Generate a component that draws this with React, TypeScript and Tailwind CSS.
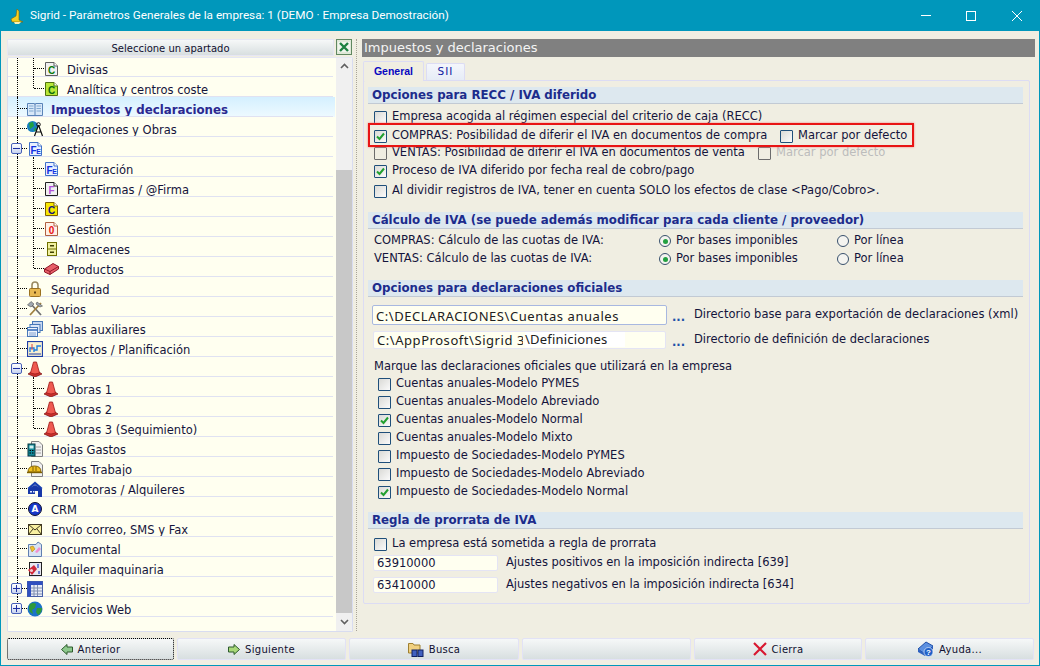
import type { ReactNode } from 'react';

const Svg = ({ children, w = 16, h = 16 }: { children: ReactNode; w?: number; h?: number }) => (
  <svg width={w} height={h} viewBox={`0 0 ${w} ${h}`} className="shrink-0 block">
    {children}
  </svg>
);

const Doc = ({ letter, bg, fg, stroke, small }: { letter: string; bg: string; fg: string; stroke: string; small?: string }) => (
  <Svg w={13} h={14}>
    <path d="M0.5 0.5H9L12.5 4V13.5H0.5Z" fill={bg} stroke={stroke} />
    <path d="M9 0.5V4H12.5" fill="#fff" stroke={stroke} />
    <text x={small ? 4.5 : 6.5} y="11.5" textAnchor="middle" fontSize="10" fontWeight="700" fontFamily="Liberation Sans" fill={fg}>
      {letter}
    </text>
    {small && (
      <text x="9.5" y="12" textAnchor="middle" fontSize="7" fontWeight="700" fontFamily="Liberation Sans" fill={fg}>
        {small}
      </text>
    )}
  </Svg>
);

const Cone = () => (
  <Svg>
    <path d="M1 13L4 11H12L15 13L8 16Z" fill="#c8302c" stroke="#7a1010" strokeWidth="0.7" />
    <path d="M6.5 1H9.5L12.5 12Q8 14 3.5 12Z" fill="#ef5a50" stroke="#a01818" strokeWidth="0.8" />
  </Svg>
);

const Globe = () => (
  <Svg>
    <circle cx="8" cy="8" r="7.5" fill="#1c72c8" />
    <path d="M3 3Q7 1 9 3L8 7L5 9L6 13L3 11Q1 7 3 3ZM10 7L15 7Q15 12 11 14L9 11Z" fill="#2f9a3a" />
  </Svg>
);

const icons: Record<string, ReactNode> = {
  divisas: <Doc letter="C" bg="#f0f0f0" fg="#0a7a0a" stroke="#606060" />,
  analitica: <Doc letter="C" bg="#b8e838" fg="#0a6a0a" stroke="#507010" />,
  book: (
    <Svg>
      <path d="M0.5 2.5H7.5L8 3.5L8.5 2.5H15.5V14.5H0.5Z" fill="#d8e8f8" stroke="#5a84b8" />
      <path d="M2 5H6.5M2 7.5H6.5M2 10H6.5M9.5 5H14M9.5 7.5H14M9.5 10H14" stroke="#80a8d0" />
      <path d="M8 3V14" stroke="#5a84b8" />
    </Svg>
  ),
  deleg: (
    <Svg w={17}>
      <circle cx="5.5" cy="5.5" r="5.5" fill="#1a80c0" />
      <path d="M2 2L6 1L7 5L3 8ZM8 6L10 9L7 10Z" fill="#20a040" />
      <path d="M11.5 4L7.5 15M11.5 4L15.5 15M9 11H14" stroke="#111" strokeWidth="1.2" fill="none" />
      <circle cx="11.5" cy="3.5" r="1.8" fill="none" stroke="#111" />
    </Svg>
  ),
  fe: <Doc letter="F" small="E" bg="#e8f0ff" fg="#1030e0" stroke="#4070c8" />,
  firma: <Doc letter="F" bg="#f0f0f0" fg="#b050d8" stroke="#202020" />,
  cartera: <Doc letter="C" bg="#f8e800" fg="#101080" stroke="#806000" />,
  gestion: <Doc letter="0" bg="#fff0e8" fg="#e81010" stroke="#b06040" />,
  almacen: (
    <Svg w={13} h={14}>
      <rect x="2.5" y="0.5" width="9" height="13" fill="#f0f0a0" stroke="#707000" />
      <path d="M2.5 7H11.5" stroke="#707000" />
      <rect x="5" y="3" width="4" height="1.5" fill="#404000" />
      <rect x="5" y="9.5" width="4" height="1.5" fill="#404000" />
    </Svg>
  ),
  producto: (
    <Svg w={15} h={12}>
      <path d="M0.5 6L9 0.5L14.5 3.5V6L6 11.5L0.5 9Z" fill="#e86068" stroke="#901828" />
      <path d="M0.5 6L6 8.5L14.5 3.5M6 8.5V11.5" fill="none" stroke="#901828" />
    </Svg>
  ),
  lock: (
    <Svg>
      <path d="M5 8V4Q5 1 8 1T11 4V8" fill="none" stroke="#9a8a60" strokeWidth="1.6" />
      <rect x="2.5" y="7.5" width="11" height="8" rx="1" fill="#e8b850" stroke="#9a7020" />
      <path d="M8 10V13M7 11.5H9" stroke="#604010" />
    </Svg>
  ),
  tools: (
    <Svg>
      <path d="M3 2L14 14" stroke="#707070" strokeWidth="1.8" />
      <path d="M14 2L3 14" stroke="#a08040" strokeWidth="1.8" />
      <path d="M0.5 4L4 0.5L7 3L4 6ZM10 1L15.5 5L13 6L9 3Z" fill="#a0a8b0" stroke="#505050" strokeWidth="0.6" />
    </Svg>
  ),
  tablas: (
    <Svg>
      <rect x="5.5" y="0.5" width="10" height="9" fill="#c8d8f0" stroke="#4878b8" />
      <rect x="3" y="3.5" width="10" height="8" fill="#dce8f8" stroke="#4878b8" />
      <rect x="0.5" y="6.5" width="10" height="9" fill="#eef4fc" stroke="#4878b8" />
      <path d="M0.5 9H10.5" stroke="#2f68b8" strokeWidth="1.5" />
      <path d="M2 12H9M2 14H9" stroke="#80a0d0" />
    </Svg>
  ),
  proyecto: (
    <Svg>
      <rect x="0.5" y="0.5" width="15" height="15" fill="#f8f0d0" stroke="#2040a8" strokeWidth="1.2" />
      <path d="M2 13H14" stroke="#2040a8" />
      <path d="M3 11V7H7V11M7 9H10V5H14" stroke="#2080e0" strokeWidth="1.4" fill="none" />
      <path d="M5 3V9" stroke="#e04040" />
    </Svg>
  ),
  cone: <Cone />,
  hojas: (
    <Svg>
      <path d="M4.5 0.5H12L15.5 4V15.5H4.5Z" fill="#f0f0f0" stroke="#808080" />
      <path d="M9 6H14M9 9H14M9 12H14" stroke="#a0a0a0" />
      <rect x="1" y="3" width="7" height="12" fill="#108898" stroke="#083840" />
      <rect x="2.5" y="4.5" width="4" height="3" fill="#d0f0f0" />
      <path d="M2.5 9.5H4M5 9.5H6.5M2.5 12H4M5 12H6.5" stroke="#000" />
    </Svg>
  ),
  partes: (
    <Svg>
      <path d="M4.5 0.5H12L15.5 4V15.5H4.5Z" fill="#f0f0f0" stroke="#808080" />
      <path d="M1 11Q1 5 7.5 5T14 11Z" fill="#f0c020" stroke="#806000" />
      <path d="M0 11.5H15" stroke="#806000" strokeWidth="1.4" />
      <path d="M6 6V10M9 6V10" stroke="#806000" />
    </Svg>
  ),
  casa: (
    <Svg>
      <path d="M0.5 7L8 0.5L15.5 7L14 8.5L8 3.5L2 8.5Z" fill="#1840b0" />
      <path d="M1 8L8 4L15 8V16H11V10H8V13H1Z" fill="#1838a8" />
      <rect x="3" y="10" width="2" height="1.5" fill="#e0e8ff" />
      <rect x="6" y="10" width="1.5" height="1.5" fill="#e0e8ff" />
    </Svg>
  ),
  crm: (
    <div className="w-[14px] h-[14px] rounded-full bg-[#1838c8] border border-[#101030] flex items-center justify-center text-white text-[9px] font-bold leading-none">
      A
    </div>
  ),
  mail: (
    <Svg w={14} h={11}>
      <rect x="0.5" y="0.5" width="13" height="10" fill="#f8f0a0" stroke="#403820" />
      <path d="M0.5 0.5L7 6L13.5 0.5M0.5 10.5L5 5M13.5 10.5L9 5" fill="none" stroke="#403820" />
    </Svg>
  ),
  documental: (
    <Svg>
      <path d="M1.5 3.5H9L11 1L14.5 3.5V15.5H1.5Z" fill="#d8e4f4" stroke="#6080b0" />
      <path d="M3 6L6 5L8 8L5 11Z" fill="#f0c030" stroke="#a07810" strokeWidth="0.5" />
      <path d="M8 11L12 6L14 8L10 12Z" fill="#f090d0" />
    </Svg>
  ),
  maquinaria: (
    <Svg w={14} h={14}>
      <rect x="1.5" y="0.5" width="12" height="13" fill="#e8e8f0" stroke="#202020" />
      <path d="M0 8L6 3L9 7L4 13Z" fill="#d02838" />
      <circle cx="3.5" cy="8.5" r="1.5" fill="#f0d0d0" />
      <path d="M10 2V6M11 9V12" stroke="#2040c0" strokeWidth="1.2" />
    </Svg>
  ),
  grid: (
    <Svg>
      <rect x="0.5" y="0.5" width="15" height="15" fill="#e8ecf8" stroke="#4860a8" />
      <rect x="0.5" y="0.5" width="15" height="3.5" fill="#3050c0" />
      <rect x="0.5" y="0.5" width="3.5" height="15" fill="#3050c0" />
      <path d="M7 4V15M10.5 4V15M4 7H15M4 10H15M4 13H15" stroke="#8090b0" />
    </Svg>
  ),
  globe: <Globe />,
};

type Node = { label: string; icon: string; level: 1 | 2; box?: '+' | '-'; last?: boolean; selected?: boolean };

const tree: Node[] = [
  { label: 'Divisas', icon: 'divisas', level: 2 },
  { label: 'Analítica y centros coste', icon: 'analitica', level: 2, last: true },
  { label: 'Impuestos y declaraciones', icon: 'book', level: 1, selected: true },
  { label: 'Delegaciones y Obras', icon: 'deleg', level: 1 },
  { label: 'Gestión', icon: 'fe', level: 1, box: '-' },
  { label: 'Facturación', icon: 'fe', level: 2 },
  { label: 'PortaFirmas / @Firma', icon: 'firma', level: 2 },
  { label: 'Cartera', icon: 'cartera', level: 2 },
  { label: 'Gestión', icon: 'gestion', level: 2 },
  { label: 'Almacenes', icon: 'almacen', level: 2 },
  { label: 'Productos', icon: 'producto', level: 2, last: true },
  { label: 'Seguridad', icon: 'lock', level: 1 },
  { label: 'Varios', icon: 'tools', level: 1 },
  { label: 'Tablas auxiliares', icon: 'tablas', level: 1 },
  { label: 'Proyectos / Planificación', icon: 'proyecto', level: 1 },
  { label: 'Obras', icon: 'cone', level: 1, box: '-' },
  { label: 'Obras 1', icon: 'cone', level: 2 },
  { label: 'Obras 2', icon: 'cone', level: 2 },
  { label: 'Obras 3 (Seguimiento)', icon: 'cone', level: 2, last: true },
  { label: 'Hojas Gastos', icon: 'hojas', level: 1 },
  { label: 'Partes Trabajo', icon: 'partes', level: 1 },
  { label: 'Promotoras / Alquileres', icon: 'casa', level: 1 },
  { label: 'CRM', icon: 'crm', level: 1 },
  { label: 'Envío correo, SMS y Fax', icon: 'mail', level: 1 },
  { label: 'Documental', icon: 'documental', level: 1 },
  { label: 'Alquiler maquinaria', icon: 'maquinaria', level: 1 },
  { label: 'Análisis', icon: 'grid', level: 1, box: '+' },
  { label: 'Servicios Web', icon: 'globe', level: 1, box: '+' },
];

function TreeRow({ node, index }: { node: Node; index: number }) {
  const isLastRow = index === tree.length - 1;
  return (
    <div
      className={`relative h-[20px] shrink-0 flex items-center pt-[7px] ${
        node.selected ? 'bg-gradient-to-b from-[#d4f0ff] to-[#eefaff]' : ''
      } ${node.level === 1 ? 'pl-[43px]' : 'pl-[59px]'}`}
    >
      <span className="absolute left-0 bottom-0 w-[325px] h-px bg-[#e0e2f2]" />
      <span className={`absolute left-[9px] top-0 border-l border-dotted border-black ${isLastRow ? 'h-[11px]' : 'h-[20px]'}`} />
      {node.level === 1 ? (
        <span className="absolute left-[10px] top-[11px] w-[9px] border-t border-dotted border-black" />
      ) : (
        <>
          <span className={`absolute left-[25px] top-0 border-l border-dotted border-black ${node.last ? 'h-[11px]' : 'h-[20px]'}`} />
          <span className="absolute left-[26px] top-[11px] w-[10px] border-t border-dotted border-black" />
        </>
      )}
      {node.box && (
        <span className="absolute left-[3px] top-[6px] w-[11px] h-[11px] rounded-[2px] border border-[#4860b8] bg-gradient-to-b from-[#ffffff] to-[#c8d4f0] flex items-center justify-center">
          <span className="relative block w-[7px] h-px bg-[#2030a0]">
            {node.box === '+' && <span className="absolute left-[3px] top-[-3px] block w-px h-[7px] bg-[#2030a0]" />}
          </span>
        </span>
      )}
      <span className={`absolute top-[2px] h-[20px] flex items-center justify-center ${node.level === 1 ? 'left-[19px] w-[16px]' : 'left-[35px] w-[16px]'}`}>
        {icons[node.icon]}
      </span>
      <span className={node.selected ? 'font-bold text-[11.8px] text-[#2a2890]' : 'text-[#14143c]'}>{node.label}</span>
    </div>
  );
}

function Check({ on, disabled }: { on?: boolean; disabled?: boolean }) {
  return (
    <span
      className={`w-[13px] h-[13px] shrink-0 rounded-[1px] border flex items-center justify-center ${
        disabled ? 'border-[#6c6c6c]' : 'border-[#1f4f7a] bg-gradient-to-br from-[#dadad6] to-[#fbfbfb]'
      }`}
    >
      {on && (
        <svg width="9" height="9" viewBox="0 0 9 9">
          <path d="M1 4.5L3.5 7L8 1.5" fill="none" stroke="#22a030" strokeWidth="2" />
        </svg>
      )}
    </span>
  );
}

function Radio() {
  return (
    <span className="w-[12px] h-[12px] shrink-0 rounded-full border border-[#38506c] bg-[#f4f4f0] flex items-center justify-center">
      <span className="w-[5px] h-[5px] rounded-full bg-[#22a040]" />
    </span>
  );
}

function Empty() {
  return <span className="w-[12px] h-[12px] shrink-0 rounded-full border border-[#38506c] bg-[#f4f4f0]" />;
}

const Section = ({ title, className = '' }: { title: string; className?: string }) => (
  <div className={`h-[17px] flex items-center pl-[4px] pt-[2px] bg-[#dde8ef] border-b border-[#c2cad4] font-bold text-[11.8px] text-[#1c2c8c] ${className}`}>{title}</div>
);

const decl: [string, boolean][] = [
  ['Cuentas anuales-Modelo PYMES', false],
  ['Cuentas anuales-Modelo Abreviado', false],
  ['Cuentas anuales-Modelo Normal', true],
  ['Cuentas anuales-Modelo Mixto', false],
  ['Impuesto de Sociedades-Modelo PYMES', false],
  ['Impuesto de Sociedades-Modelo Abreviado', false],
  ['Impuesto de Sociedades-Modelo Normal', true],
];

function Btn({ w, icon, label, focus }: { w: string; icon?: ReactNode; label?: string; focus?: boolean }) {
  return (
    <div
      className={`${w} h-[22px] shrink-0 flex items-center justify-center gap-[5px] rounded-[2px] bg-gradient-to-b from-[#f6f8f8] to-[#d8dfe0] text-[10px] tracking-[0.3px] text-[#101030] ${
        focus ? 'border border-dotted border-black' : 'border border-[#e2e2f6]'
      }`}
    >
      {icon}
      {label && <span>{label}</span>}
    </div>
  );
}

const ArrowL = () => (
  <svg width="12" height="11" viewBox="0 0 12 11">
    <path d="M0.5 5.5L6 0.5V3H11.5V8H6V10.5Z" fill="#8cc88c" stroke="#2c5a2c" />
  </svg>
);
const ArrowR = () => (
  <svg width="12" height="11" viewBox="0 0 12 11">
    <path d="M11.5 5.5L6 0.5V3H0.5V8H6V10.5Z" fill="#a8d878" stroke="#2c5a2c" />
  </svg>
);

export default function App() {
  return (
    <div className="w-[1040px] h-[666px] flex flex-col overflow-hidden border-x border-b border-[#0097bb] bg-[#f0eee2] text-[11.5px] text-[#14143c] font-['DejaVu_Sans',sans-serif]">
      <div className="h-[31px] shrink-0 -mx-px flex items-center bg-[#0097bb] text-white text-[11.75px] font-['Roboto',sans-serif]">
        <svg width="16" height="16" viewBox="0 0 16 16" className="ml-[9px] mr-[5px]">
          <path d="M8 1L10 3V12L14 14H3L2 11L7 8Z" fill="#f4d020" stroke="#7a6010" strokeWidth="0.6" />
          <path d="M5 14H12L10 16H6Z" fill="#f8f0b0" />
        </svg>
        <span>Sigrid - Parámetros Generales de la empresa: 1 (DEMO · Empresa Demostración)</span>
        <div className="ml-auto flex items-center">
          <span className="w-[10px] h-px bg-white mr-[35px]" />
          <span className="w-[10px] h-[10px] border border-white mr-[36px]" />
          <svg width="10" height="10" viewBox="0 0 10 10" className="mr-[18px]">
            <path d="M0 0L10 10M10 0L0 10" stroke="#fff" />
          </svg>
        </div>
      </div>

      <div className="flex-1 min-h-0 flex pl-[6px] pt-[8px]">
        <div className="w-[346px] shrink-0 flex flex-col">
          <div className="flex h-[17px] shrink-0">
            <div className="w-[327px] flex items-center justify-center pt-[2px] rounded-[1px] border border-[#e6e6f4] bg-gradient-to-b from-[#f6f8f8] to-[#d8dfe0] text-[10px] text-[#101030]">
              Seleccione un apartado
            </div>
            <svg width="16" height="16" viewBox="0 0 16 16" className="ml-[2px]">
              <rect x="0.5" y="0.5" width="15" height="15" fill="#dfe8d8" stroke="#608860" />
              <rect x="2" y="3" width="12" height="10" fill="#f0f4ec" />
              <path d="M4 4L12 12M12 4L4 12" stroke="#1c8040" strokeWidth="2.4" />
            </svg>
          </div>
          <div className="mt-[1px] h-[575px] flex overflow-hidden rounded-[2px] border border-[#d8dcf0] border-t-[#e4e6f4] bg-[#fffff0]">
            <div className="w-[327px] shrink-0 flex flex-col -mt-[1px] overflow-hidden">
              {tree.map((n, i) => (
                <TreeRow key={i} node={n} index={i} />
              ))}
            </div>
            <div className="w-[1px] shrink-0" />
            <div className="w-[16px] shrink-0 flex flex-col bg-[#f0f0f0]">
              <div className="h-[16px] flex items-center justify-center">
                <svg width="9" height="6" viewBox="0 0 9 6">
                  <path d="M1 5L4.5 1.5L8 5" fill="none" stroke="#606060" strokeWidth="1.6" />
                </svg>
              </div>
              <div className="h-[96px]" />
              <div className="flex-1 bg-[#c8c8c8]" />
              <div className="h-[18px] flex items-center justify-center">
                <svg width="9" height="6" viewBox="0 0 9 6">
                  <path d="M1 1L4.5 4.5L8 1" fill="none" stroke="#606060" strokeWidth="1.6" />
                </svg>
              </div>
            </div>
          </div>
        </div>

        <div className="ml-[3px] h-[592px] border-l border-dotted border-[#a8a498]" />

        <div className="ml-[5px] w-[673px] shrink-0 flex flex-col">
          <div className="h-[18px] shrink-0 bg-[#808080] pl-[2px] flex items-center text-[13px] text-[#f4f4f4]">Impuestos y declaraciones</div>
          <div className="h-[23px] shrink-0 flex items-end pl-[1px]">
            <div className="relative z-10 w-[61px] h-[20px] -mb-px flex items-start justify-center pt-[2px] rounded-t-[2px] border border-b-0 border-[#dcdcf4] bg-[#f0eee2] text-[10.5px] font-bold text-[#0808c0] font-['Liberation_Sans',sans-serif]">
              General
            </div>
            <div className="ml-[2px] w-[39px] h-[17px] flex items-center justify-center rounded-t-[2px] border border-b-0 border-[#dcdcf4] bg-gradient-to-b from-[#f4f6fc] to-[#e6ecf6] text-[10.5px] tracking-[1px] text-[#1020a0]">
              SII
            </div>
          </div>
          <div className="relative ml-[1px] w-[667px] h-[524px] shrink-0 rounded-[2px] border border-[#dcdcf4] pt-[6px] pl-[4px] pr-[6px]">
            <Section title="Opciones para RECC / IVA diferido" />
            <div className="mt-[3px] pl-[6px]">
              <div className="h-[20px] flex items-center gap-[5px]">
                <Check />
                <span>Empresa acogida al régimen especial del criterio de caja (RECC)</span>
              </div>
              <div className="h-[18px] flex items-center gap-[5px]">
                <Check on />
                <span className="w-[383px] shrink-0 whitespace-nowrap">COMPRAS: Posibilidad de diferir el IVA en documentos de compra</span>
                <Check />
                <span>Marcar por defecto</span>
              </div>
              <div className="h-[16px] flex items-center gap-[5px]">
                <Check disabled />
                <span className="w-[361px] shrink-0 whitespace-nowrap">VENTAS: Posibilidad de diferir el IVA en documentos de venta</span>
                <Check disabled />
                <span className="text-[#bcbcbc]">Marcar por defecto</span>
              </div>
              <div className="h-[20px] flex items-center gap-[5px]">
                <Check on />
                <span>Proceso de IVA diferido por fecha real de cobro/pago</span>
              </div>
              <div className="h-[20px] flex items-center gap-[5px]">
                <Check />
                <span>Al dividir registros de IVA, tener en cuenta SOLO los efectos de clase &lt;Pago/Cobro&gt;.</span>
              </div>
            </div>

            <Section title="Cálculo de IVA (se puede además modificar para cada cliente / proveedor)" className="mt-[11px]" />
            <div className="mt-[3px] pl-[6px]">
              {['COMPRAS', 'VENTAS'].map((k) => (
                <div key={k} className="h-[18px] flex items-center">
                  <span className="w-[285px] shrink-0">{k}: Cálculo de las cuotas de IVA:</span>
                  <Radio />
                  <span className="ml-[5px] w-[161px] shrink-0">Por bases imponibles</span>
                  <Empty />
                  <span className="ml-[5px]">Por línea</span>
                </div>
              ))}
            </div>

            <Section title="Opciones para declaraciones oficiales" className="mt-[12px]" />
            <div className="mt-[8px] h-[20px] pl-[4px] flex items-center">
              <div className="w-[295px] h-[20px] shrink-0 flex items-center pl-[3px] pt-[3px] rounded-[2px] border border-[#a8b8e0] bg-[#fffff0] text-[13px] tracking-[0.55px] text-[#202020] font-['Noto_Sans',sans-serif]">
                C:\DECLARACIONES\Cuentas anuales
              </div>
              <span className="ml-[5px] w-[22px] shrink-0 pt-[3px] leading-[12px] font-bold text-[#2050a8]">...</span>
              <span>Directorio base para exportación de declaraciones (xml)</span>
            </div>
            <div className="mt-[6px] h-[18px] pl-[5px] flex items-center">
              <div className="w-[293px] h-[18px] shrink-0 flex items-center pl-[3px] pt-[2px] rounded-[2px] border border-[#e4e4f4] bg-[#fffff0] text-[13px] tracking-[0.55px] text-[#202020] font-['Noto_Sans',sans-serif]">
                <span className="w-[146px] shrink-0 overflow-hidden whitespace-nowrap">C:\AppProsoft\Sigrid 3</span>
                <span className="ml-[2px] w-[100px] shrink-0 h-[15px] -mt-[3px] flex items-center bg-white tracking-[0.2px]">\Definiciones</span>
              </div>
              <span className="ml-[6px] w-[22px] shrink-0 pt-[3px] leading-[12px] font-bold text-[#2050a8]">...</span>
              <span>Directorio de definición de declaraciones</span>
            </div>
            <div className="mt-[9px] h-[17px] pl-[6px] flex items-center">Marque las declaraciones oficiales que utilizará en la empresa</div>
            <div className="pl-[10px]">
              {decl.map(([label, on]) => (
                <div key={label} className="h-[18px] flex items-center gap-[5px]">
                  <Check on={on} />
                  <span>{label}</span>
                </div>
              ))}
            </div>

            <Section title="Regla de prorrata de IVA" className="mt-[11px]" />
            <div className="mt-[6px] h-[18px] pl-[6px] flex items-center gap-[5px]">
              <Check />
              <span>La empresa está sometida a regla de prorrata</span>
            </div>
            {[
              ['63910000', 'Ajustes positivos en la imposición indirecta [639]', 'mt-[2px]'],
              ['63410000', 'Ajustes negativos en la imposición indirecta [634]', 'mt-[6px]'],
            ].map(([code, text, mt]) => (
              <div key={code} className={`${mt} h-[16px] pl-[5px] flex items-center`}>
                <div className="w-[125px] h-[16px] shrink-0 flex items-center pl-[3px] pt-[1px] rounded-[2px] border border-[#e4e4f4] bg-[#fffff0]">{code}</div>
                <span className="ml-[8px]">{text}</span>
              </div>
            ))}

            <div className="absolute left-[4px] top-[42px] w-[546px] h-[24px] border-2 border-[#e81414] shadow-[0_0_2px_#f08080]" />
          </div>
        </div>
      </div>

      <div className="h-[22px] shrink-0 flex gap-[3px] pl-[6px] mb-[5px]">
        <Btn w="w-[167px]" focus icon={<ArrowL />} label="Anterior" />
        <Btn w="w-[169px]" icon={<ArrowR />} label="Siguiente" />
        <Btn
          w="w-[170px]"
          icon={
            <svg width="16" height="16" viewBox="0 0 16 16">
              <path d="M0.5 2.5H5L6 4H12V12H0.5Z" fill="#f0d080" stroke="#a08030" />
              <rect x="4" y="9" width="5" height="6.5" fill="#4060c0" stroke="#102060" />
              <rect x="10" y="9" width="5" height="6.5" fill="#4060c0" stroke="#102060" />
            </svg>
          }
          label="Busca"
        />
        <Btn w="w-[169px]" />
        <Btn
          w="w-[168px]"
          icon={
            <svg width="14" height="14" viewBox="0 0 14 14">
              <path d="M1 1L13 13M13 1L1 13" stroke="#d81830" strokeWidth="2.2" />
            </svg>
          }
          label="Cierra"
        />
        <Btn
          w="w-[169px]"
          icon={
            <svg width="17" height="16" viewBox="0 0 17 16">
              <path d="M1 8L9 1L16 5L8 13Z" fill="#5c90e0" stroke="#2050a8" />
              <path d="M1 8V11L8 15L16 8V5L8 13Z" fill="#2c60c0" />
              <circle cx="11.5" cy="11" r="4.5" fill="#2060c8" stroke="#fff" strokeWidth="0.6" />
              <text x="11.5" y="14" textAnchor="middle" fontSize="8" fontWeight="700" fill="#fff" fontFamily="Liberation Sans">?</text>
            </svg>
          }
          label="Ayuda..."
        />
      </div>
    </div>
  );
}
